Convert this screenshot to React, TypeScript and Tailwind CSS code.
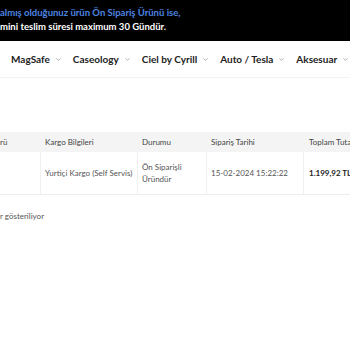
import { ChevronDown } from 'lucide-react'

const menu = ['MagSafe', 'Caseology', 'Ciel by Cyrill', 'Auto / Tesla', 'Aksesuar']

export default function App() {
  return (
    <div className="w-[350px] h-[350px] overflow-hidden bg-white font-['Lato',sans-serif] text-[#333]">
      {/* Duyuru bandı */}
      <div className="h-[41px] bg-black pt-[6px] text-[9.5px] font-bold leading-[14px] whitespace-nowrap">
        <p className="text-[#4d84e0]">almış olduğunuz ürün Ön Sipariş Ürünü ise,</p>
        <p className="text-white">mini teslim süresi maximum 30 Gündür.</p>
      </div>

      {/* Menü */}
      <nav className="h-[37px] flex items-center gap-[11px] pl-[11px] border-b border-[#f2f2f2] whitespace-nowrap">
        {menu.map((item) => (
          <span key={item} className="flex items-center gap-[5px] text-[10px] font-bold text-[#222]">
            {item}
            <ChevronDown className="w-[7px] h-[7px] text-[#777]" strokeWidth={2} />
          </span>
        ))}
      </nav>

      {/* Sipariş tablosu */}
      <div className="mt-[54px] text-[8px] whitespace-nowrap">
        <div className="flex h-[20px] items-center bg-[#f4f4f4] text-[#444]">
          <div className="w-[41px] shrink-0">rü</div>
          <div className="w-[97px] shrink-0 pl-[4px]">Kargo Bilgileri</div>
          <div className="w-[69px] shrink-0 pl-[4px]">Durumu</div>
          <div className="w-[97px] shrink-0 pl-[4px]">Sipariş Tarihi</div>
          <div className="w-[60px] shrink-0 pl-[5px]">Toplam Tutar</div>
        </div>
        <div className="flex h-[43px] border-b border-[#eeeeee] text-[#555]">
          <div className="w-[41px] shrink-0 border-r border-[#f0f0f0]" />
          <div className="w-[97px] shrink-0 pl-[4px] flex items-center border-r border-[#f0f0f0]">Yurtiçi Kargo (Self Servis)</div>
          <div className="w-[69px] shrink-0 pl-[4px] flex flex-col justify-center leading-[12px] border-r border-[#f0f0f0]">
            <span>Ön Siparişli</span>
            <span>Üründür</span>
          </div>
          <div className="w-[97px] shrink-0 pl-[4px] flex items-center border-r border-[#f0f0f0]">15-02-2024 15:22:22</div>
          <div className="w-[60px] shrink-0 pl-[5px] flex items-center font-bold text-[#222]">1.199,92 TL</div>
        </div>
        <p className="mt-[15px] text-[#555]">r gösteriliyor</p>
      </div>
    </div>
  )
}
